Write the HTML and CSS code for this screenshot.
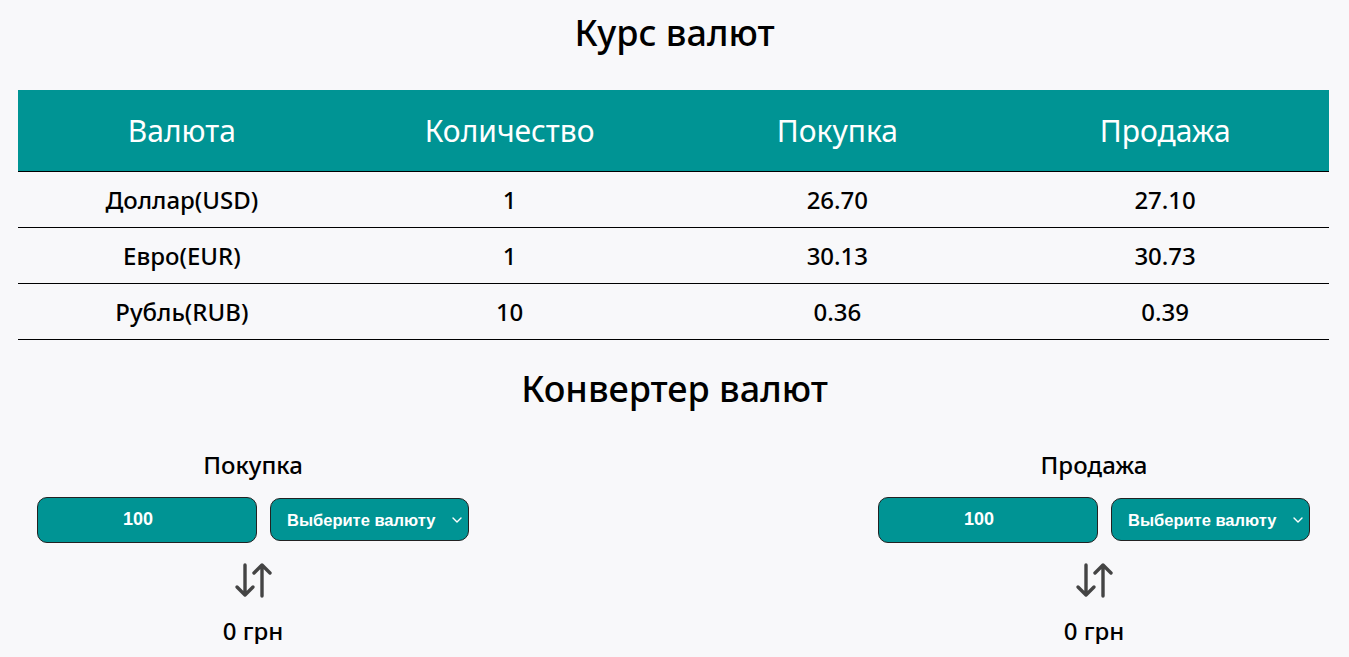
FILE: index.html
```html
<!DOCTYPE html>
<html lang="ru">
<head>
<meta charset="utf-8">
<title>Курс валют</title>
<link rel="stylesheet" href="styles.css">
</head>
<body>
<main class="page">
  <h1 class="title">Курс валют</h1>
  <table class="rates">
    <thead>
      <tr><th>Валюта</th><th>Количество</th><th>Покупка</th><th>Продажа</th></tr>
    </thead>
    <tbody>
      <tr><td>Доллар(USD)</td><td>1</td><td>26.70</td><td>27.10</td></tr>
      <tr><td>Евро(EUR)</td><td>1</td><td>30.13</td><td>30.73</td></tr>
      <tr><td>Рубль(RUB)</td><td>10</td><td>0.36</td><td>0.39</td></tr>
    </tbody>
  </table>
  <h2 class="subtitle">Конвертер валют</h2>
  <section class="converter">
    <div class="conv-col">
      <div class="conv-label">Покупка</div>
      <div class="conv-row">
        <input class="amount" type="text" value="100">
        <div class="select-wrap">
          <select class="currency"><option>Выберите валюту</option><option>USD</option><option>EUR</option><option>RUB</option></select>
          <svg class="chev" width="10" height="6" viewBox="0 0 10 6"><path d="M1 1l4 4 4-4" fill="none" stroke="#fff" stroke-width="1.4" stroke-linecap="round" stroke-linejoin="round"/></svg>
        </div>
      </div>
      <svg class="swap" width="38" height="36" viewBox="0 0 38 36"><g fill="none" stroke="#444" stroke-width="3.4" stroke-linecap="round" stroke-linejoin="round"><path d="M11 3v30M3 25l8 8 8-8"/><path d="M28 3v31M20 11l8-8 8 8"/></g></svg>
      <div class="result">0 грн</div>
    </div>
    <div class="conv-col">
      <div class="conv-label">Продажа</div>
      <div class="conv-row">
        <input class="amount" type="text" value="100">
        <div class="select-wrap">
          <select class="currency"><option>Выберите валюту</option><option>USD</option><option>EUR</option><option>RUB</option></select>
          <svg class="chev" width="10" height="6" viewBox="0 0 10 6"><path d="M1 1l4 4 4-4" fill="none" stroke="#fff" stroke-width="1.4" stroke-linecap="round" stroke-linejoin="round"/></svg>
        </div>
      </div>
      <svg class="swap" width="38" height="36" viewBox="0 0 38 36"><g fill="none" stroke="#444" stroke-width="3.4" stroke-linecap="round" stroke-linejoin="round"><path d="M11 3v30M3 25l8 8 8-8"/><path d="M28 3v31M20 11l8-8 8 8"/></g></svg>
      <div class="result">0 грн</div>
    </div>
  </section>
</main>
</body>
</html>
```
FILE: styles.css
```css
* { box-sizing: border-box; }
body {
  margin: 0;
  background: #f8f8fa;
  color: #000;
  font-family: "Noto Sans", "Open Sans", sans-serif;
}
.title {
  margin: 13px 0 0;
  font-size: 36px;
  line-height: 40px;
  font-weight: 500;
  text-align: center;
}
.rates {
  margin: 37px 20px 0 18px;
  width: calc(100% - 38px);
  border-collapse: collapse;
  table-layout: fixed;
}
.rates th {
  height: 81px;
  padding: 0;
  background: #009494;
  color: #fff;
  font-size: 30px;
  font-weight: 400;
  border-bottom: 1px solid #000;
}
.rates td {
  height: 56px;
  padding: 0;
  text-align: center;
  font-size: 24px;
  font-weight: 500;
  border-bottom: 1px solid #000;
}
.subtitle {
  margin: 29px 0 0;
  font-size: 36px;
  line-height: 40px;
  font-weight: 500;
  text-align: center;
}
.converter {
  display: flex;
  justify-content: space-between;
  padding: 0 39px 0 37px;
  margin-top: 43px;
}
.conv-col {
  display: flex;
  flex-direction: column;
  align-items: center;
}
.conv-label {
  font-size: 24px;
  line-height: 26px;
  font-weight: 500;
}
.conv-row {
  display: flex;
  align-items: center;
  gap: 13px;
  margin-top: 19px;
}
.amount {
  width: 220px;
  height: 46px;
  padding: 0 18px 0 0;
  border: 1px solid #222;
  border-radius: 10px;
  background: #009494;
  color: #fff;
  text-align: center;
  font-family: "Liberation Sans", Arial, sans-serif;
  font-weight: 700;
  font-size: 18px;
  outline: none;
}
.select-wrap {
  position: relative;
}
.currency {
  appearance: none;
  -webkit-appearance: none;
  width: 199px;
  height: 43px;
  border: 1px solid #222;
  border-radius: 10px;
  background: #009494;
  color: #fff;
  padding: 0 0 0 16px;
  font-family: "Liberation Sans", Arial, sans-serif;
  font-weight: 700;
  font-size: 16.5px;
  outline: none;
}
.chev {
  position: absolute;
  right: 7px;
  top: 19px;
  pointer-events: none;
}
.swap {
  display: block;
  margin-top: 19px;
}
.result {
  margin-top: 20px;
  font-size: 24px;
  line-height: 26px;
  font-weight: 500;
}
```
